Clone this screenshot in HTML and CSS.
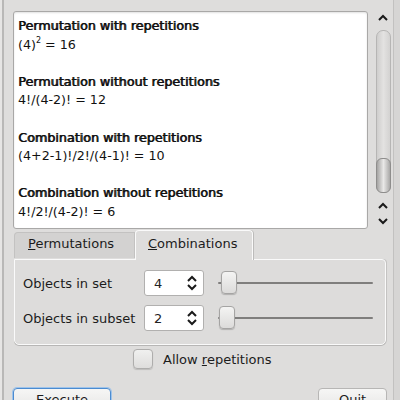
FILE: index.html
```html
<!DOCTYPE html>
<html>
<head>
<meta charset="utf-8">
<link rel="stylesheet" href="styles.css">
</head>
<body>
<div class="window">
  <div class="top">
    <div class="view">
      <div class="result">
        <div class="title">Permutation with repetitions</div>
        <div class="formula">(4)<sup>2</sup> = 16</div>
      </div>
      <div class="result">
        <div class="title">Permutation without repetitions</div>
        <div class="formula">4!/(4-2)! = 12</div>
      </div>
      <div class="result">
        <div class="title">Combination with repetitions</div>
        <div class="formula">(4+2-1)!/2!/(4-1)! = 10</div>
      </div>
      <div class="result">
        <div class="title">Combination without repetitions</div>
        <div class="formula">4!/2!/(4-2)! = 6</div>
      </div>
    </div>
    <div class="scrollbar">
      <svg class="arrow" width="12" height="8" viewBox="0 0 12 8"><path d="M2 6 L6 2 L10 6" fill="none" stroke="#1a1a1a" stroke-width="2"/></svg>
      <div class="trough"><div class="handle"></div></div>
      <svg class="arrow" width="12" height="8" viewBox="0 0 12 8"><path d="M2 6 L6 2 L10 6" fill="none" stroke="#1a1a1a" stroke-width="2"/></svg>
      <svg class="arrow" width="12" height="8" viewBox="0 0 12 8"><path d="M2 2 L6 6 L10 2" fill="none" stroke="#1a1a1a" stroke-width="2"/></svg>
    </div>
  </div>

  <div class="tabs">
    <div class="tab inactive"><u>P</u>ermutations</div>
    <div class="tab active"><u>C</u>ombinations</div>
  </div>
  <div class="panel">
    <div class="row">
      <div class="label">Objects in set</div>
      <div class="spin"><span>4</span>
        <svg width="12" height="16" viewBox="0 0 12 16"><path d="M2 6 L6 2 L10 6 M2 10 L6 14 L10 10" fill="none" stroke="#1a1a1a" stroke-width="2"/></svg>
      </div>
      <div class="slider"><div class="groove"></div><div class="knob k1"></div></div>
    </div>
    <div class="row">
      <div class="label">Objects in subset</div>
      <div class="spin"><span>2</span>
        <svg width="12" height="16" viewBox="0 0 12 16"><path d="M2 6 L6 2 L10 6 M2 10 L6 14 L10 10" fill="none" stroke="#1a1a1a" stroke-width="2"/></svg>
      </div>
      <div class="slider"><div class="groove"></div><div class="knob k2"></div></div>
    </div>
  </div>
  <div class="checkrow">
    <div class="check"></div>
    <div class="checklabel">Allow <u>r</u>epetitions</div>
  </div>
  <div class="buttons">
    <div class="btn exec">Execute</div>
    <div class="btn quit">Quit</div>
  </div>
</div>
</body>
</html>
```

FILE: styles.css
```css
html, body {
  margin: 0;
  padding: 0;
  background: #dcdbda;
}
.window {
  position: relative;
  width: 400px;
  height: 400px;
  overflow: hidden;
  background: #dedddc;
  font-family: "DejaVu Sans", sans-serif;
  font-size: 13px;
  color: #1c1c1c;
  box-sizing: border-box;
  border-left: 2px solid #e6e5e4;
  box-shadow: inset 2px 0 0 #b9b8b7, inset -6px 0 0 #d6d5d4, inset -7px 0 0 #c2c1c0;
}
.top {
  display: flex;
  margin: 11px 0 0 11px;
  height: 215px;
}
.view {
  width: 349px;
  height: 211px;
  background: #fff;
  border: 1px solid #a9a8a7;
  border-radius: 3px;
  box-shadow: inset 0 1px 2px rgba(0,0,0,0.12);
  padding: 5px 0 0 4px;
  box-sizing: content-box;
  overflow: hidden;
  font-size: 12.7px;
  line-height: 18.6px;
  color: #111;
}
.result { margin-bottom: 18.6px; }
.title {
  font-weight: normal;
  text-shadow: 0.8px 0 0 #111;
}
.formula sup { font-size: 8px; line-height: 0; vertical-align: 6px; }
.scrollbar {
  margin-left: 6px;
  width: 18px;
  display: flex;
  flex-direction: column;
  align-items: center;
}
.arrow { display: block; }
.scrollbar .arrow:first-child { margin-top: 3px; margin-bottom: 8px; }
.trough {
  width: 13px;
  height: 161px;
  border: 1px solid #b6b5b4;
  border-radius: 7px;
  background: linear-gradient(90deg, #cfcecd, #e3e2e1 50%, #d3d2d1);
  display: flex;
  flex-direction: column;
  justify-content: flex-end;
  margin-bottom: 9px;
}
.handle {
  height: 33px;
  margin: 0 -1px -1px;
  border: 1px solid #8e8d8c;
  border-radius: 6px;
  background: linear-gradient(90deg, #a4a3a2, #e9e8e7 50%, #a9a8a7);
}
.scrollbar .arrow + .arrow { margin-top: 7px; }

.tabs {
  display: flex;
  align-items: flex-end;
  margin: 4px 0 0 12px;
  height: 29px;
  position: relative;
  z-index: 2;
}
.tab {
  box-sizing: border-box;
  padding-left: 13px;
}
.tab.inactive {
  width: 121px;
  height: 26px;
  line-height: 22px;
  background: #d3d2d1;
  border: 1px solid #c3c2c1;
  border-bottom: none;
  border-radius: 4px 0 0 0;
  margin-bottom: 1px;
}
.tab.active {
  width: 118px;
  height: 30px;
  line-height: 26px;
  background: #dedddc;
  border: 1px solid #fafafa;
  border-bottom: none;
  border-radius: 4px 4px 0 0;
  box-shadow: 1px 0 0 #bcbbba;
  margin-bottom: -1px;
  padding-left: 12px;
}
.panel {
  margin-left: 12px;
  width: 372px;
  height: 86px;
  box-sizing: border-box;
  border: 1px solid #fafafa;
  border-radius: 0 4px 5px 5px;
  box-shadow: 0 1px 0 #b7b6b5, 1px 0 0 #c4c3c2;
  background: #dddcdb;
  padding: 10px 0 0 8px;
  display: flex;
  flex-direction: column;
  gap: 9px;
}
.row {
  display: flex;
  align-items: center;
  height: 26px;
}
.label { width: 121px; }
.spin {
  width: 60px;
  height: 26px;
  box-sizing: border-box;
  background: #fff;
  border: 1px solid #b1b0af;
  border-radius: 3px;
  display: flex;
  align-items: center;
  justify-content: space-between;
  padding: 0 5px 0 9px;
}
.spin span { color: #222; }
.slider {
  position: relative;
  margin-left: 14px;
  width: 155px;
  height: 26px;
}
.groove {
  position: absolute;
  left: 0;
  right: 0;
  top: 12px;
  height: 2px;
  background: #7f7e7d;
  border-radius: 1px;
}
.knob {
  position: absolute;
  top: 1px;
  width: 16px;
  height: 23px;
  box-sizing: border-box;
  border: 1px solid #a5a4a3;
  border-radius: 4px;
  background: linear-gradient(180deg, #f4f4f3, #dcdbda);
  box-shadow: 0 1px 1px rgba(0,0,0,0.2);
}
.k1 { left: 3px; }
.k2 { left: 1px; }
.checkrow {
  display: flex;
  align-items: center;
  margin: 4px 0 0 131px;
  height: 20px;
}
.check {
  width: 20px;
  height: 20px;
  box-sizing: border-box;
  border: 1px solid #aeadac;
  border-radius: 4px;
  background: linear-gradient(180deg, #f0f0ef, #dedddc);
  box-shadow: 0 1px 1px rgba(0,0,0,0.15);
}
.checklabel { margin-left: 10px; }
.buttons {
  display: flex;
  justify-content: space-between;
  margin: 19px 0 0 11px;
  width: 374px;
}
.btn {
  height: 28px;
  box-sizing: border-box;
  border-radius: 4px;
  background: linear-gradient(180deg, #f6f6f5, #e3e2e1);
  text-align: center;
  line-height: 22px;
}
.exec {
  width: 98px;
  border: 1px solid #4b8bd0;
  box-shadow: 0 0 0 1px #9ec3ea;
}
.quit {
  width: 69px;
  border: 1px solid #b7b6b5;
}
```
